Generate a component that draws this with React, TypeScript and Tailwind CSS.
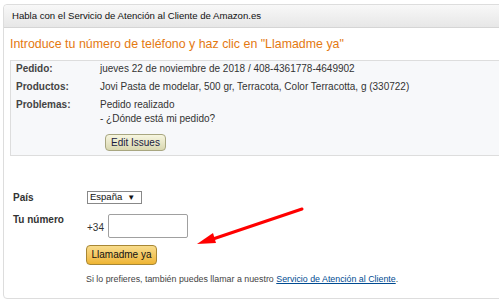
import React from "react";

export default function App() {
  return (
    <div className="w-[499px] h-[306px] overflow-hidden bg-white pl-[3px] pt-[4px]" style={{ fontFamily: '"Liberation Sans", Arial, sans-serif' }}>
      <div className="w-[520px] h-[295px] border border-[#dddddd] rounded-l-[4px]">
        <div className="h-[23px] border-b border-[#d5d5d5] bg-gradient-to-b from-[#f8f8f8] to-[#e7e7e7] rounded-tl-[4px] pl-[8px] flex items-center text-[9.6px] text-[#111]">
          Habla con el Servicio de Atención al Cliente de Amazon.es
        </div>
        <div className="pl-[6px] pt-[8px]">
          <div className="text-[12.4px] text-[#e47911] leading-[16px]">
            Introduce tu número de teléfono y haz clic en "Llamadme ya"
          </div>
          <div className="mt-[8px] w-[520px] h-[96px] border border-[#dddddd] bg-[#f7f8fa] pl-[5px] text-[10px] text-[#333]">
            <div className="flex leading-[16px]">
              <div className="w-[84px] font-bold text-[#444]">Pedido:</div>
              <div>jueves 22 de noviembre de 2018 / 408-4361778-4649902</div>
            </div>
            <div className="flex leading-[19px]">
              <div className="w-[84px] font-bold text-[#444]">Productos:</div>
              <div>Jovi Pasta de modelar, 500 gr, Terracota, Color Terracotta, g (330722)</div>
            </div>
            <div className="flex leading-[14px] pt-[2px]">
              <div className="w-[84px] font-bold text-[#444]">Problemas:</div>
              <div>
                <div>Pedido realizado</div>
                <div>- ¿Dónde está mi pedido?</div>
                <button className="mt-[8px] ml-[5px] h-[17px] px-[5px] border border-[#a8a680] rounded-[4px] bg-gradient-to-b from-[#f7f6e0] to-[#d9d7b0] text-[10px] text-[#1a1a40] leading-[14px]">
                  Edit Issues
                </button>
              </div>
            </div>
          </div>
          <div className="mt-[34px] flex items-center text-[10px]">
            <div className="w-[77px] pl-[3px] font-bold text-[#333]">País</div>
            <div className="h-[13px] w-[55px] border border-[#888] flex items-center pl-[2px] text-[9.5px] text-[#111]">
              España <span className="ml-[5px] text-[8px]">▼</span>
            </div>
          </div>
          <div className="mt-[9px] flex text-[10px] h-[24px]">
            <div className="w-[77px] pl-[3px] font-bold text-[#333] -mt-[2px]">Tu número</div>
            <div className="flex items-center">
              <span className="text-[#333] mr-[4px] mt-[2px]">+34</span>
              <div className="w-[80px] h-[24px] border border-[#a0a0a0] rounded-[2px] bg-white" />
            </div>
          </div>
          <div className="mt-[3px] pl-[76px]">
            <button className="h-[20px] w-[71px] border border-[#a88734] rounded-[4px] bg-gradient-to-b from-[#f8dc8b] to-[#efb530] text-[10px] text-[#111] leading-[18px]">
              Llamadme ya
            </button>
          </div>
          <div className="mt-[8px] pl-[76px] text-[8.85px] text-[#444]">
            Si lo prefieres, también puedes llamar a nuestro{" "}
            <span className="text-[#004b91] underline">Servicio de Atención al Cliente</span>.
          </div>
        </div>
      </div>
      <svg className="absolute left-0 top-0" width="499" height="306" style={{ pointerEvents: "none" }}>
        <line x1="302" y1="209" x2="210" y2="240" stroke="#ff0000" strokeWidth="3" strokeLinecap="round" />
        <polygon points="197,244 213,233 216,243" fill="#ff0000" />
      </svg>
    </div>
  );
}
